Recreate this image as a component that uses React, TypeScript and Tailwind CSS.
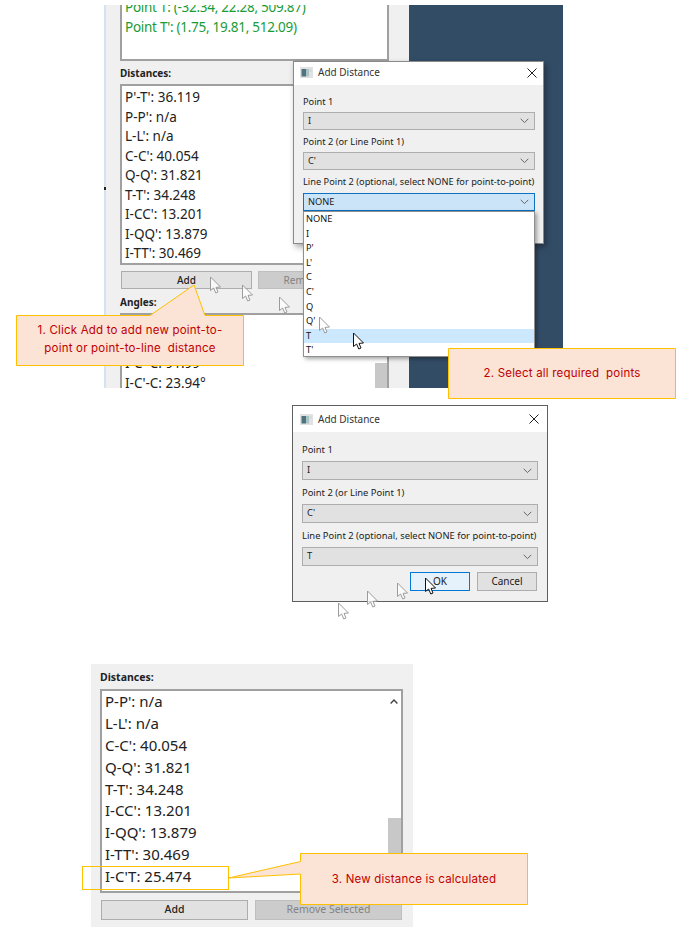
const ui = { fontFamily: '"Noto Sans", "Open Sans", sans-serif' };
const note = { fontFamily: 'Inter, "Noto Sans", sans-serif' };

function Cursor({ x, y, ghost = false }: { x: number; y: number; ghost?: boolean }) {
  return (
    <svg className="absolute" style={{ left: x, top: y }} width="14" height="20" viewBox="0 0 14 20">
      <path
        d="M1.5 1 L1.5 14.5 L4.6 12 L6.8 17 L9 16 L7 11.4 L11.5 11 Z"
        fill="#ffffff"
        fillOpacity={ghost ? 0.75 : 1}
        stroke={ghost ? "#9c9c9c" : "#111111"}
        strokeWidth="1"
        strokeLinejoin="miter"
      />
    </svg>
  );
}

function Chevron() {
  return (
    <svg width="9" height="6" viewBox="0 0 9 6" className="shrink-0">
      <path d="M0.7 0.8 L4.5 4.6 L8.3 0.8" fill="none" stroke="#666666" strokeWidth="1" />
    </svg>
  );
}

function WinIcon() {
  return (
    <svg width="13" height="11" viewBox="0 0 13 11" className="shrink-0">
      <rect x="0" y="0" width="13" height="11" fill="#e2e2e2" />
      <rect x="1.5" y="2" width="4.5" height="7.5" fill="#4f7280" />
      <rect x="6" y="2" width="3" height="7.5" fill="#a9c2c4" />
      <rect x="9.5" y="2" width="2" height="3" fill="#d0d8d8" />
    </svg>
  );
}

function CloseX() {
  return (
    <svg width="10" height="10" viewBox="0 0 10 10" className="shrink-0">
      <path d="M0.5 0.5 L9.5 9.5 M9.5 0.5 L0.5 9.5" stroke="#222222" strokeWidth="1" />
    </svg>
  );
}

function Combo({ value, h, active = false, size }: { value: string; h: string; active?: boolean; size: string }) {
  return (
    <div
      className={`flex items-center justify-between pl-1 pr-[5px] border text-[#1a1a1a] ${h} ${size} ${
        active ? "bg-[#cce4f7] border-[#0b72c4]" : "bg-[#e1e1e1] border-[#adadad]"
      }`}
    >
      <span>{value}</span>
      <Chevron />
    </div>
  );
}

function Callout({ points, box, lines }: { points: string; box: string; lines: string[] }) {
  return (
    <>
      <svg className="absolute left-0 top-0 pointer-events-none" width="699" height="931" viewBox="0 0 699 931">
        <polygon points={points} fill="#fbe3d6" stroke="#ffc000" strokeWidth="1" />
      </svg>
      <div
        className={`absolute flex flex-col items-center justify-center text-[11.5px] leading-[18px] text-[#c00000] tracking-[0.2px] ${box}`}
        style={note}
      >
        {lines.map((l) => (
          <span key={l} className="whitespace-pre">
            {l}
          </span>
        ))}
      </div>
    </>
  );
}

const topDistances = ["P'-T': 36.119", "P-P': n/a", "L-L': n/a", "C-C': 40.054", "Q-Q': 31.821", "T-T': 34.248", "I-CC': 13.201", "I-QQ': 13.879", "I-TT': 30.469"];
const bottomDistances = ["P-P': n/a", "L-L': n/a", "C-C': 40.054", "Q-Q': 31.821", "T-T': 34.248", "I-CC': 13.201", "I-QQ': 13.879", "I-TT': 30.469", "I-C'T: 25.474"];
const options = ["NONE", "I", "P'", "L'", "C", "C'", "Q", "Q'", "T", "T'"];

function TopShot() {
  return (
    <div className="absolute left-[104px] top-[5px] w-[459px] h-[383px] flex overflow-hidden" style={ui}>
      <div className="w-[305px] h-full bg-[#f0f0f0] border-l-2 border-[#d5e3f0] pl-[14px] pr-[20px] flex flex-col">
        <div className="h-[63px] shrink-0 bg-white border-x-2 border-b-2 border-[#a0a0a0] overflow-hidden pl-[3px] text-[13.5px] leading-[19.5px] tracking-[-0.27px] text-[#1a9c35] -mt-[7px]">
          <div className="h-[19.5px]">Point T: (-32.34, 22.28, 509.87)</div>
          <div className="h-[19.5px]">Point T': (1.75, 19.81, 512.09)</div>
        </div>
        <div className="mt-[6px] text-[10px] leading-[12px] font-bold text-[#222222]">Distances:</div>
        <div className="mt-[5px] h-[181px] shrink-0 bg-white border-2 border-[#a0a0a0] pl-[3px] pt-[2px] text-[13.5px] leading-[19.5px] text-[#222222]">
          {topDistances.map((d) => (
            <div key={d} className="h-[19.5px]">
              {d}
            </div>
          ))}
        </div>
        <div className="mt-[6px] flex gap-[6px] text-[10px] h-[18px] shrink-0">
          <div className="w-[131px] ml-px bg-[#e1e1e1] border border-[#adadad] flex items-center justify-center font-medium text-[#222222]">
            Add
          </div>
          <div className="w-[131px] bg-[#cccccc] border border-[#bfbfbf] flex items-center justify-center text-[#838383]">
            Remove Selected
          </div>
        </div>
        <div className="mt-[7px] text-[10px] leading-[12px] font-bold text-[#222222]">Angles:</div>
        <div className="mt-[5px] flex-1 bg-white border-t-2 border-x-2 border-[#a0a0a0] flex">
          <div className="flex-1 pl-[3px] pt-[39px] text-[13.5px] leading-[19.5px] text-[#222222]">
            <div className="h-[19.5px]">I-C'-C: 91.99°</div>
            <div className="h-[19.5px]">I-C'-C: 23.94°</div>
          </div>
          <div className="w-[12px] flex flex-col justify-end">
            <div className="h-[30px] bg-[#c8c8c8]" />
          </div>
        </div>
      </div>
      <div className="flex-1 bg-[#334c66]" />
    </div>
  );
}

function DialogOne() {
  return (
    <div
      className="absolute left-[293px] top-[61px] w-[251px] h-[183px] bg-[#f0f0f0] border border-[#8a8a8a] shadow-[2px_3px_6px_rgba(0,0,0,0.35)] flex flex-col"
      style={ui}
    >
      <div className="h-[23px] shrink-0 bg-white flex items-center pl-[6px] pr-[6px] pb-[2px] gap-[5px] text-[10px] text-[#333333]">
        <WinIcon />
        <span className="flex-1">Add Distance</span>
        <CloseX />
      </div>
      <div className="pl-[9px] pr-[8px] flex flex-col text-[9.25px] text-[#222222]">
        <div className="h-[12px] mt-[11px] leading-[12px]">Point 1</div>
        <div className="mt-[4px]">
          <Combo value="I" h="h-[18px]" size="text-[9.25px]" />
        </div>
        <div className="h-[12px] mt-[6px] leading-[12px]">Point 2 (or Line Point 1)</div>
        <div className="mt-[4px]">
          <Combo value="C'" h="h-[18px]" size="text-[9.25px]" />
        </div>
        <div className="h-[12px] mt-[6px] leading-[12px] whitespace-nowrap">Line Point 2 (optional, select NONE for point-to-point)</div>
        <div className="mt-[5px]">
          <Combo value="NONE" h="h-[18px]" active size="text-[9.25px]" />
        </div>
      </div>
    </div>
  );
}

function Dropdown() {
  return (
    <div
      className="absolute left-[303px] top-[211px] w-[232px] h-[146px] bg-white border border-[#8f8f8f] shadow-[2px_2px_4px_rgba(0,0,0,0.35)] flex flex-col text-[9.25px] text-[#111111]"
      style={ui}
    >
      {options.map((o) => (
        <div key={o} className={`h-[14.6px] leading-[14.6px] pl-[2px] ${o === "T" ? "bg-[#cce8ff]" : ""}`}>
          {o}
        </div>
      ))}
    </div>
  );
}

function DialogTwo() {
  return (
    <div className="absolute left-[292px] top-[405px] w-[256px] h-[197px] bg-[#f0f0f0] border border-[#5e5e5e] flex flex-col" style={ui}>
      <div className="h-[26px] shrink-0 bg-white flex items-center pl-[7px] pr-[8px] gap-[5px] text-[10px] text-[#333333]">
        <WinIcon />
        <span className="flex-1">Add Distance</span>
        <CloseX />
      </div>
      <div className="px-[9px] flex flex-col text-[9.4px] text-[#222222]">
        <div className="h-[12px] mt-[12px] leading-[12px]">Point 1</div>
        <div className="mt-[5px]">
          <Combo value="I" h="h-[19px]" size="text-[9.4px]" />
        </div>
        <div className="h-[12px] mt-[7px] leading-[12px]">Point 2 (or Line Point 1)</div>
        <div className="mt-[5px]">
          <Combo value="C'" h="h-[19px]" size="text-[9.4px]" />
        </div>
        <div className="h-[12px] mt-[7px] leading-[12px] whitespace-nowrap">Line Point 2 (optional, select NONE for point-to-point)</div>
        <div className="mt-[5px]">
          <Combo value="T" h="h-[19px]" size="text-[9.4px]" />
        </div>
        <div className="mt-[6px] flex justify-end gap-[7px] pr-px text-[10px]">
          <div className="w-[60px] h-[19px] bg-[#e5f1fb] border border-[#0078d7] flex items-center justify-center text-[#1a1a1a]">OK</div>
          <div className="w-[60px] h-[19px] bg-[#e1e1e1] border border-[#adadad] flex items-center justify-center text-[#1a1a1a]">Cancel</div>
        </div>
      </div>
    </div>
  );
}

function BottomShot() {
  return (
    <div className="absolute left-[91px] top-[664px] w-[322px] h-[263px] bg-[#f0f0f0] pl-[9px] pr-[10px] flex flex-col" style={ui}>
      <div className="mt-[7px] text-[10.5px] leading-[12px] font-bold text-[#222222]">Distances:</div>
      <div className="mt-[6px] h-[204px] shrink-0 bg-white border-2 border-[#a0a0a0] flex">
        <div className="flex-1 pl-[3px] text-[15px] leading-[21.9px] text-[#222222]">
          {bottomDistances.map((d) => (
            <div key={d} className="h-[21.9px]">
              {d}
            </div>
          ))}
        </div>
        <div className="w-[14px] flex flex-col items-center pt-[8px]">
          <svg width="8" height="5" viewBox="0 0 8 5">
            <path d="M0.6 4.4 L4 1 L7.4 4.4" fill="none" stroke="#444444" strokeWidth="1.4" />
          </svg>
          <div className="mt-[114px] w-[13px] h-[70px] bg-[#c8c8c8]" />
        </div>
      </div>
      <div className="mt-[7px] flex gap-[7px] h-[20px] shrink-0 text-[10.5px] pl-px">
        <div className="w-[147px] bg-[#e1e1e1] border border-[#adadad] flex items-center justify-center font-medium text-[#222222]">Add</div>
        <div className="w-[147px] bg-[#cccccc] border border-[#bfbfbf] flex items-center justify-center text-[#838383]">Remove Selected</div>
      </div>
    </div>
  );
}

export default function App() {
  return (
    <div className="relative w-[699px] h-[931px] bg-white overflow-hidden">
      <TopShot />
      <div className="absolute left-[104px] top-[187px] w-[2px] h-[3px] bg-[#222222]" />
      <DialogOne />
      <Dropdown />
      <DialogTwo />
      <BottomShot />

      <Cursor x={209} y={276} ghost />
      <Cursor x={241} y={284} ghost />
      <Cursor x={278} y={296} ghost />
      <Cursor x={318} y={316} ghost />
      <Cursor x={352} y={332} />
      <Cursor x={337} y={602} ghost />
      <Cursor x={366} y={590} ghost />
      <Cursor x={396} y={582} ghost />
      <Cursor x={424} y={577} />

      <Callout
        points="16.5,315.5 150,315.5 194,285 205,315.5 243.5,315.5 243.5,365.5 16.5,365.5"
        box="left-[17px] top-[316px] w-[226px] h-[45px]"
        lines={["1. Click Add to add new point-to-", "point or point-to-line  distance"]}
      />
      <Callout
        points="448.5,348.5 675.5,348.5 675.5,398.5 448.5,398.5"
        box="left-[449px] top-[349px] w-[226px] h-[47px]"
        lines={["2. Select all required  points"]}
      />

      <div className="absolute left-[82px] top-[866px] w-[147px] h-[24px] border border-[#ffc000]" />
      <Callout
        points="300.5,853.5 527.5,853.5 527.5,904.5 300.5,904.5 300.5,874 228.5,878 300.5,861.5"
        box="left-[301px] top-[854px] w-[226px] h-[50px]"
        lines={["3. New distance is calculated"]}
      />
    </div>
  );
}
